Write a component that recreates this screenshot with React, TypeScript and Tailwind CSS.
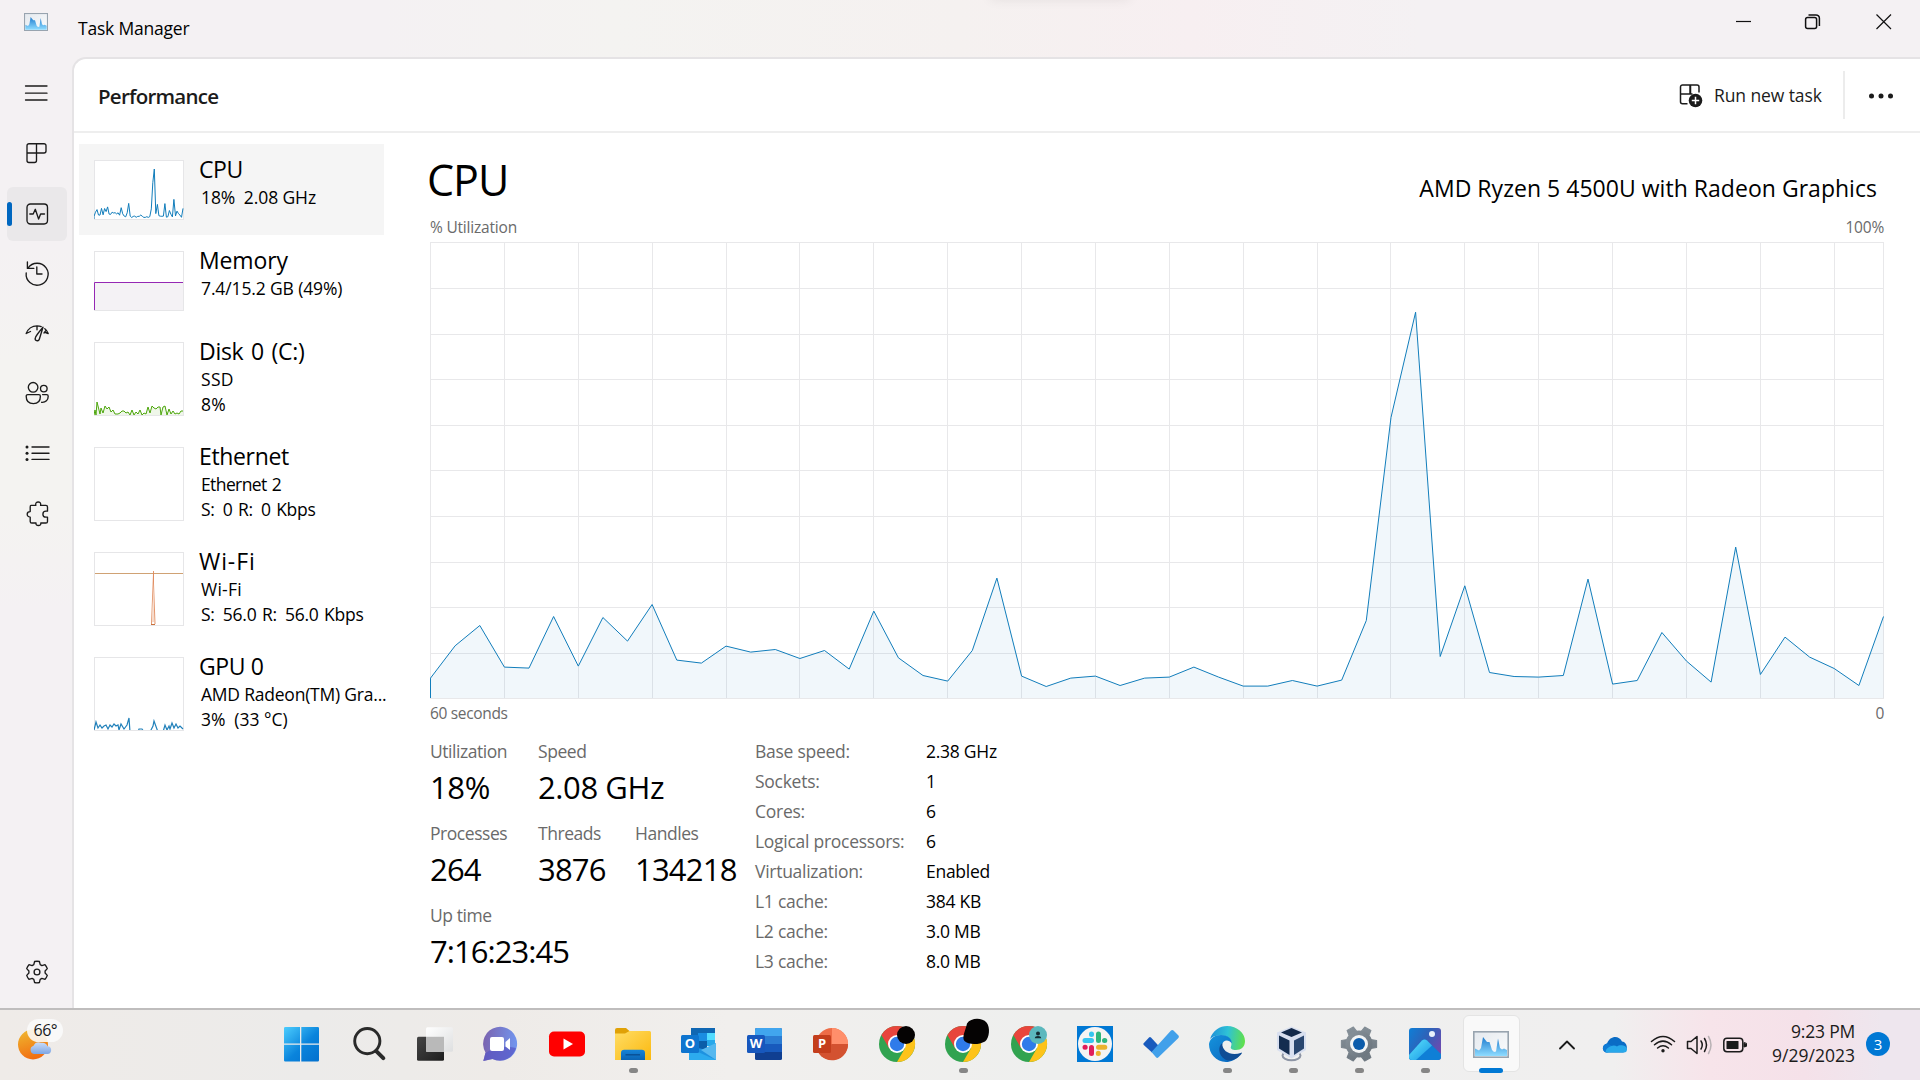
import React from "react";

const cpuTops = [
  678.3, 646, 625.7, 667.3, 668.3, 616.7, 666.3, 617.7, 641.3, 604.7, 660.3, 663.3, 646.3, 652.3, 649.7,
  658.7, 650.7, 669.3, 611.3, 658, 675.7, 681.3, 650.7, 578.3, 676.3, 686.7, 678.3, 676.3, 685.7, 678.3,
  677.3, 667.3, 677.3, 686.3, 686.3, 680.7, 686.3, 680.3, 620.7, 417.6, 312.4, 656.7, 586, 672.7, 676.7,
  677.3, 675.7, 579.3, 684.3, 680.7, 632.7, 661.3, 682.3, 547.3, 674.7, 637.3, 657.3, 668.7, 685.7, 616.7,
];
const cpu = cpuTops.map((t) => (698.5 - t) / 456);

const disk = "0,0 1,5 2,0 3,13 6,1 7,7 9,2 11,9 13,6 15,8 17,3 19,5 21,1 24,1 26,2 28,4 30,4 32,2 34,3 36,0 38,5 40,0 42,3 44,1 46,5 48,0 50,2 52,1 54,8 56,2 58,9 60,7 62,6 64,8 66,8 67,0 69,8 71,9 73,0 75,6 77,1 79,4 81,1 83,2 85,1 87,4 89,4";
const gpu = "0,0 2,8 4,2 6,5 8,2 10,4 12,5 14,1 16,5 18,3 20,6 22,4 24,5 25,0 27,6 30,1 33,5 35,12 36,-2 44,-2 45,1 48,1 50,-2 56,-2 59,4 60,9 64,-2 69,-2 71,5 73,0 75,4 76,1 78,7 80,2 82,6 84,2 86,4 89,1";
const flip = (s: string, h: number) =>
  s.split(" ").map((p) => { const [x, y] = p.split(",").map(Number); return `${x},${h - y}`; }).join(" ");

function MiniSvg({ h, children }: { h: number; children?: React.ReactNode }) {
  return (
    <svg width="90" height={h} className="block shrink-0" fill="none">
      <rect x="0.5" y="0.5" width="89" height={h - 1} fill="#fff" stroke="#e6e6e8" />
      {children}
    </svg>
  );
}

function CpuChart() {
  const pts = cpu.map((v, i) => `${(0.5 + (i * 1453) / 59).toFixed(1)},${(456.3 - v * 456).toFixed(1)}`).join(" ");
  const cols = Array.from({ length: 19 }, (_, i) => Math.round((i + 1) * 73.88) + 0.5);
  const rows = Array.from({ length: 9 }, (_, i) => Math.ceil((i + 1) * 45.6) + 0.5);
  return (
    <svg width="1454" height="457" className="block" fill="none">
      <g stroke="#e8e8ea">
        <rect x="0.5" y="0.5" width="1453" height="456" />
        {cols.map((x) => <path key={x} d={`M${x} 0V456`} />)}
        {rows.map((y) => <path key={y} d={`M0 ${y}H1453`} />)}
      </g>
      <polygon points={`0.5,456 ${pts} 1453.5,456`} fill="#117dbb" fillOpacity="0.06" />
      <polyline points={`0.5,456 ${pts}`} stroke="#117dbb" strokeWidth="1" />
    </svg>
  );
}

const list = [
  { name: "CPU", nameTrack: "tracking-[-0.4px]", h: 60, box: "h-[91px]", lines: ["18%\u2002" + "2.08 GHz"], track: ["tracking-[-0.1px]"] },
  { name: "Memory", nameTrack: "tracking-[-0.15px]", h: 60, box: "h-[91px]", lines: ["7.4/15.2 GB (49%)"], track: ["tracking-[-0.13px]"] },
  { name: "Disk 0 (C:)", nameTrack: "tracking-[-0.3px] [word-spacing:2px]", h: 74, box: "h-[105px]", lines: ["SSD", "8%"], track: ["tracking-[0.3px]", "tracking-[0.3px]"] },
  { name: "Ethernet", nameTrack: "tracking-[-0.35px]", h: 74, box: "h-[105px]", lines: ["Ethernet 2", "S: \u20090 R: \u20090 Kbps"], track: ["tracking-[-0.6px] [word-spacing:1.2px]", "tracking-[-0.3px] [word-spacing:1.3px]"] },
  { name: "Wi-Fi", nameTrack: "tracking-[0.9px]", h: 74, box: "h-[105px]", lines: ["Wi-Fi", "S: \u200956.0 R: \u200956.0 Kbps"], track: ["tracking-[0.25px]", "tracking-[-0.25px] [word-spacing:1.2px]"] },
  { name: "GPU 0", nameTrack: "tracking-[-0.4px]", h: 74, box: "h-[105px]", lines: ["AMD Radeon(TM) Gra...", "3%\u2002(33 °C)"], track: ["tracking-[-0.22px]", "tracking-[0px]"] },
];

function Thumb({ i, h }: { i: number; h: number }) {
  const cpuPts = cpu.map((v, k) => `${((k * 89) / 59).toFixed(1)},${(59 - v * 59).toFixed(1)}`).join(" ");
  return (
    <MiniSvg h={h}>
      {i === 0 && <polyline points={`0,59 ${cpuPts}`} stroke="#117dbb" strokeWidth="1" />}
      {i === 1 && <><rect x="1" y="31" width="88" height="28" fill="#f4f2f5" /><path d="M.5 59V31.5H89" stroke="#9528b4" /></>}
      {i === 2 && <><polygon points={`0,73 ${flip(disk, 73)} 89,73`} fill="#eff7e9" /><polyline points={flip(disk, 73)} stroke="#4da60c" /></>}
      {i === 4 && <><path d="M1 21.5H89" stroke="#d0a274" /><path d="M59.5 19V32L61 72M59.5 22L57.5 72" stroke="#e08a5c" strokeWidth=".9" /><path d="M59.5 30L58 70L60 70Z" fill="#f6d9c8" /><path d="M57 72.5H61" stroke="#c9713d" /></>}
      {i === 5 && <polyline points={flip(gpu, 73)} stroke="#2080ba" strokeWidth="1.2" />}
      {i === 5 && <path d="M0 73.5H90" stroke="#e6e6e8" />}
    </MiniSvg>
  );
}

const navIcons = [
  <path key="m" d="M.5 5H22M.5 12.2H22M.5 19H22" strokeWidth="1.3" />,
  <path key="p" d="M4 2.7H19a2 2 0 0 1 2 2V10a2 2 0 0 1-2 2H2V4.7a2 2 0 0 1 2-2ZM2 12V19.5a2 2 0 0 0 2 2H9.5a2 2 0 0 0 2-2V2.7" />,
  <><rect x="2" y="2" width="20.5" height="20" rx="3.4" /><path d="M4.8 12H8.2L10.3 7.3L13.6 17L15.6 12H19.5" /></>,
  <><path d="M2.4 1V7.400H8.8M3 7.100A11 11 0 1 1 1.200 12" /><path d="M11.8 5.800V13H17" /></>,
  <><path d="M1.2 12.500C2.8 8.300 7 4.900 12 4.900c1.8 0 3 .2 4.2.7M19.8 7.700C21.5 8.900 22.5 10.500 23.2 12.500L20.5 11.500M1.2 12.500L5.5 10.500M12 4.900V8.800M19 12L20.8 9.700" /><path d="M18 6.300L14.3 18.300a2.1 2.1 0 0 1-4-1.3Q10.8 14.700 18 6.300Z" /></>,
  <><circle cx="8.1" cy="6.3" r="4.8" /><circle cx="18.8" cy="7.6" r="3.3" /><path d="M2.8 13.6H13.8a1.6 1.6 0 0 1 1.6 1.6c0 4.6-2.6 7.4-7 7.4s-7.2-2.8-7.2-7.4a1.6 1.6 0 0 1 1.6-1.6ZM17.6 13.6H21.6a1.6 1.6 0 0 1 1.6 1.6c0 4-2.5 6.4-6.6 6.1" /></>,
  <><path d="M7 6H24M7 12.200H24M7 18.400H24" /><g fill="#1b1b1b" stroke="none"><circle cx="2" cy="6" r="1.5" /><circle cx="2" cy="12.200" r="1.5" /><circle cx="2" cy="18.400" r="1.5" /></g></>,
  <path key="s" transform="translate(.8 .8)" d="M5.2 3.6H10c-.5-2.8 1-3.4 2.4-3.4s2.9.6 2.4 3.4h5.3a1.6 1.6 0 0 1 1.6 1.6v4.2h-1.6a3 3 0 0 0 0 6H21.7v4.2a1.6 1.6 0 0 1-1.6 1.6H15c.2 2.200-1 2.500-2.400 2.500s-2.600-.3-2.400-2.500H6a1.6 1.6 0 0 1-1.6-1.6V15.3C2.2 15.3 1.4 13.8 1.4 12.4S2.2 9.8 4.4 9.8V5.2c0-.9.2-1.6.8-1.6Z" />,
];

function NavIcon({ children }: { children: React.ReactNode }) {
  return <svg width="24" height="24" viewBox="0 0 24 24" overflow="visible" fill="none" stroke="#1b1b1b" strokeWidth="1.35" strokeLinejoin="round" strokeLinecap="round">{children}</svg>;
}

const gear = (teeth: number, ro: number, ri: number, c: number, wo: number, wi: number) => {
  const p: string[] = [];
  for (let i = 0; i < teeth; i++) {
    const a = (i * 2 * Math.PI) / teeth;
    [[-wi, ri], [-wo, ro], [wo, ro], [wi, ri]].forEach(([d, r]) =>
      p.push(`${(c + r * Math.sin(a + d)).toFixed(2)},${(c - r * Math.cos(a + d)).toFixed(2)}`));
  }
  return p.join(" ");
};

function TmIcon({ className, id }: { className: string; id: string }) {
  return (
    <svg viewBox="0 0 36 27" className={className} preserveAspectRatio="none">
      <defs>
        <linearGradient id={id} x1="0" y1="0" x2="0" y2="1"><stop stopColor="#1f7ccf" /><stop offset="1" stopColor="#8fdcff" /></linearGradient>
        <linearGradient id={id + "b"} x1="0" y1="0" x2="1" y2="1"><stop stopColor="#e4e9ee" /><stop offset="1" stopColor="#fbfcfd" /></linearGradient>
      </defs>
      <rect x=".8" y=".8" width="34.4" height="25.4" fill={`url(#${id}b)`} stroke="#98a4af" strokeWidth="1.6" />
      <path d="M2 17.5 6 19.5 8 17 10 6 12 8.5 14 11 16.500 11 19 19 21 21 23 20.500 25 7.500 27 17 29 18.500 31 17.500 34 19V25H2Z" fill={`url(#${id})`} />
    </svg>
  );
}

function Chrome({ badge }: { badge: React.ReactNode }) {
  return (
    <svg width="36" height="36" viewBox="-18 -18 36 36" overflow="visible">
      <circle r="18" fill="#31a350" />
      <path d="M-15.600-9A18 18 0 0 1 15.600-9L0-9-7.800 4.500Z" fill="#e8453c" />
      <path d="M15.600-9A18 18 0 0 1 0 18L7.800 4.500 0-9Z" fill="#fdc31a" />
      <circle r="9" fill="#fff" /><circle r="7.200" fill="#2f7bea" />
      {badge}
    </svg>
  );
}

function S({ children, defs }: { children: React.ReactNode; defs?: React.ReactNode }) {
  return <svg width="36" height="36" viewBox="0 0 36 36" overflow="visible">{defs && <defs>{defs}</defs>}{children}</svg>;
}
function Grad({ id, a, b }: { id: string; a: string; b: string }) {
  return <linearGradient id={id} x1="0" y1="0" x2="1" y2="1"><stop stopColor={a} /><stop offset="1" stopColor={b} /></linearGradient>;
}
function Letter({ x, children }: { x: number; children: string }) {
  return <text x={x} y="22" textAnchor="middle" fontSize="13" fontWeight="700" fontFamily="Open Sans, sans-serif" fill="#fff">{children}</text>;
}

const apps: { icon: React.ReactNode; dot?: boolean; active?: boolean }[] = [
  { icon: <S defs={<linearGradient id="win" gradientUnits="userSpaceOnUse" x1="0" y1="0" x2="32" y2="34"><stop stopColor="#4fd0ff" /><stop offset=".6" stopColor="#0a84dc" /><stop offset="1" stopColor="#0473d0" /></linearGradient>}><path transform="translate(-2 .4)" fill="url(#win)" d="M2.200.6H17V17H1V1.800A1.200 1.200 0 0 1 2.200.6ZM18.300.6H34.800A1.200 1.200 0 0 1 36 1.800V17H18.300ZM1 18.300H17V35H2.200A1.200 1.200 0 0 1 1 33.800ZM18.300 18.300H36V33.800A1.200 1.200 0 0 1 34.800 35H18.300Z" /></S> },
  { icon: <S><g transform="translate(-1.200 .6)" fill="none" stroke="#2a2a2a"><circle cx="17.500" cy="14.500" r="12.600" strokeWidth="2.900" /><path d="M26.500 24.500L33.500 31.500" strokeWidth="4" strokeLinecap="round" /></g></S> },
  { icon: <S defs={<><Grad id="tv" a="#454545" b="#1d1d1d" /><Grad id="tv2" a="#ffffff" b="#dedfe0" /></>}><g transform="translate(-2 .8)"><rect x="2" y="10" width="27" height="24" rx="1.500" fill="url(#tv)" /><rect x="11" y=".5" width="27" height="24.500" rx="1.500" fill="url(#tv2)" /><path d="M11 10H29V25H11Z" fill="#b9b9b9" /></g></S> },
  { icon: <S defs={<linearGradient id="chat" x1="0" y1=".2" x2="1" y2="0.3"><stop stopColor="#7a62ae" /><stop offset="1" stopColor="#7295ee" /></linearGradient>}><g transform="translate(-1 0)"><path d="M1.300 35L3.500 26.500A17 17 0 1 1 10.500 33Z" fill="url(#chat)" /><path d="M1.300 35L3.500 27Q17 18 34 22A17 17 0 0 1 10.500 33Z" fill="#5756c4" opacity=".7" /><rect x="8" y="11" width="14" height="14" rx="2" fill="#fff" /><path d="M23.500 16L28 12V24L23.500 20.500Z" fill="#fff" /></g></S> },
  { icon: <S><rect y="5.500" width="36" height="25" rx="5" fill="#f00" /><path d="M14.500 12.500L24 18L14.500 23.500Z" fill="#fff" /></S> },
  { dot: true, icon: <S defs={<><Grad id="fo" a="#ffdd65" b="#fbb80e" /><linearGradient id="fb" x1="0" y1="0" x2="0" y2="1"><stop stopColor="#1684d8" /><stop offset="1" stopColor="#0b64b4" /></linearGradient></>}><path d="M0 4a2 2 0 0 1 2-2H11L15 5.500 11 9H0Z" fill="#e0a106" /><path d="M0 7.500H10L14.500 5H34.500A1.500 1.500 0 0 1 36 6.500V34H0Z" fill="url(#fo)" /><path d="M6 34V27a3.200 3.200 0 0 1 3.200-3.200H26.800A3.200 3.200 0 0 1 30 27V34Z" fill="url(#fb)" /><path d="M10.500 28.800H25" stroke="#0a4f93" strokeWidth="1.400" /></S> },
  { icon: <S><path d="M10 2H34V20H10Z" fill="#1067b3" /><path d="M17 7H26V15H17Z" fill="#1a8de2" /><path d="M26 7H34V14H26Z" fill="#53dcff" /><path d="M18 15H26V24H18Z" fill="#0b5da9" /><path d="M26 14H34V20H26Z" fill="#28a8ea" /><path d="M8 20L26 24 35 17V34H8Z" fill="#1e92e0" /><path d="M8 22L35 34H8Z" fill="#2cabef" /><path d="M20 24L35 17V34Z" fill="#56b8ef" /><rect y="9" width="18" height="18" rx="1.500" fill="#0f75cf" /><Letter x={9}>O</Letter></S> },
  { icon: <S><rect x="8" y="2" width="27" height="32" rx="1.500" fill="#103f91" /><path d="M8 3.500A1.500 1.500 0 0 1 9.500 2H33.500A1.500 1.500 0 0 1 35 3.500V10H8Z" fill="#41a5ee" /><path d="M8 10H35V18H8Z" fill="#2b7cd3" /><path d="M8 18H35V26H8Z" fill="#185abd" /><rect y="9" width="18" height="18" rx="1.500" fill="#1757bd" /><Letter x={9}>W</Letter></S> },
  { icon: <S><circle cx="19" cy="18" r="16" fill="#ed6c47" /><path d="M19 2A16 16 0 0 1 35 18H19Z" fill="#ff8f6b" /><path d="M35 18A16 16 0 0 1 5 26L19 18Z" fill="#d35230" /><rect y="9" width="18" height="18" rx="1.500" fill="#c43e1c" /><Letter x={9}>P</Letter></S> },
  { icon: <Chrome badge={<circle cx="9" cy="-9" r="9" fill="#050303" />} /> },
  { dot: true, icon: <Chrome badge={<path d="M4-20.500C8-26.500 19-26.500 23.500-21.500C27.500-16.500 26.500-6 22-2.500C16 1 5 1 1.500-3C-1.500-7 2.500-13 4-20.500Z" fill="#050303" />} /> },
  { icon: <Chrome badge={<><circle cx="9" cy="-9" r="9" fill="#5bb8bd" /><circle cx="9" cy="-10.500" r="2" fill="#152c33" /><path d="M5.800-5.800Q6-8 9-8T12.200-5.800Z" fill="#152c33" /></>} /> },
  { icon: <S><path fill="#0078d4" d="M0 0H36V36H0Z" /><circle cx="18" cy="18" r="17" fill="#f5f4f3" /><g strokeWidth="5" strokeLinecap="round" fill="none"><path d="M8 14.500H14.500M14.500 8V8.500" stroke="#36c5f0" /><path d="M21.500 8V14.500M27.800 14.500H27.500" stroke="#2eb67d" /><path d="M21.500 21.200H27.800M21.300 27.500V27.200" stroke="#ecb22e" /><path d="M14.500 21.500V27.500M8 21.200H8.200" stroke="#e01e5a" /></g></S> },
  { icon: <S><path d="M.4 17.500L6 11.400Q7 10.600 8 11.500L15.800 20 9 26.500.5 18.700Z" fill="#185abd" /><path d="M8.500 26L28 4.600Q29.300 3.400 30.500 4.600L35.500 9.600Q36.400 10.700 35.400 12L15.500 31.300Q14.200 32.600 13 31.300Z" fill="#41a0ea" /></S> },
  { dot: true, icon: <S defs={<><linearGradient id="e1" x1="0" y1=".3" x2="1" y2=".4"><stop stopColor="#1d8fd8" /><stop offset=".5" stopColor="#2fc2d6" /><stop offset="1" stopColor="#5fe04c" /></linearGradient><Grad id="e2" a="#1593dc" b="#0a63bd" /></>}><path d="M1 13C4 4 11 0 18 0C28 0 36 7 36 15C36 21 32 24 27 24C23 24 21 22.500 22 20.500C23.500 17 22 10 13 9.500C7 9 3 11 1 13Z" fill="url(#e1)" /><path d="M0 18C1 12 6 9 12 9C19 9 23 13 22.800 17.500C20 13 13.500 13.500 13 19.500C12.500 26 19 31 31 28.500C27 34 22 36 17 36C7 35.500 0 28 0 18Z" fill="url(#e2)" /><path d="M13.200 17C9 20 9 29 15.500 33C20 36.500 29 33.500 33 27Q33.200 26.300 32.300 26.700C23 30 13 26.500 13.200 17Z" fill="#104d95" /></S> },
  { dot: true, icon: <S><ellipse cx="16.500" cy="29.500" rx="9" ry="4.800" fill="none" stroke="#8d95a5" strokeWidth="2" /><path d="M16.500 .5L31 6.500V24L16.500 32.500 2 24V6.500Z" fill="#d8dfef" /><path d="M16.500 2L27 6.500 16.500 11 6 6.500Z" fill="#13294a" /><path d="M4 9.500L14.500 14.500V29L4 22.500Z" fill="#142d50" /><path d="M29 9.500L19 14.500V29L29 22.500Z" fill="#29466f" /></S> },
  { dot: true, icon: <S defs={<Grad id="ge" a="#8a949c" b="#68727b" />}><g transform="rotate(30 18 18)"><polygon points={gear(6, 18, 12.500, 18, 0.2, 0.36)} fill="url(#ge)" stroke="url(#ge)" strokeLinejoin="round" strokeWidth="1" /></g><circle cx="18" cy="18" r="13.500" fill="url(#ge)" /><circle cx="18" cy="18" r="9" fill="#f2f4f5" /><circle cx="18" cy="18" r="6" fill="#0c5cab" /></S> },
  { dot: true, icon: <S defs={<><linearGradient id="ph" x1="0" y1="0" x2="1" y2=".6"><stop stopColor="#0e7fd7" /><stop offset=".5" stopColor="#2d63b9" /><stop offset="1" stopColor="#6b4bb0" /></linearGradient><Grad id="ph2" a="#5fe3fb" b="#1495e6" /></>}><rect x="2" y="2" width="32" height="32" rx="3" fill="url(#ph)" /><path d="M2 29L15 14.500Q17.500 12.500 20 14.500L34 28V31A3 3 0 0 1 31 34H5A3 3 0 0 1 2 31Z" fill="#0f7fd6" /><path d="M2 29L15 14.500Q17.500 12.500 20 14.500L25 19.500 9 34H5A3 3 0 0 1 2 31Z" fill="url(#ph2)" /><circle cx="25" cy="8" r="3" fill="#e9f1fb" /></S> },
  { active: true, icon: <TmIcon id="tma" className="h-[27px] w-9" /> },
];

const stats = [
  [["Utilization", "18%"], ["Speed", "2.08 GHz"]],
  [["Processes", "264"], ["Threads", "3876"], ["Handles", "134218"]],
  [["Up time", "7:16:23:45"]],
];
const valueTrack = ["tracking-[-0.4px]", "tracking-[-0.8px]", "tracking-[-0.95px]"];
const colW = ["w-[108px]", "w-[97px]", "w-[110px]"];
const specs = [
  ["Base speed:", "2.38 GHz"], ["Sockets:", "1"], ["Cores:", "6"], ["Logical processors:", "6"],
  ["Virtualization:", "Enabled"], ["L1 cache:", "384 KB"], ["L2 cache:", "3.0 MB"], ["L3 cache:", "8.0 MB"],
];

export default function App() {
  return (
    <div className="flex h-[1080px] w-[1920px] flex-col overflow-hidden bg-[#f4f1f3] font-['Open_Sans',sans-serif] text-black">
      <header className="relative flex h-[57px] shrink-0 bg-[linear-gradient(90deg,#f4f1f3_0%,#f4f1f3_20%,#f4f3f1_32%,#f5f1f0_50%,#f7eff1_62%,#f4f1f3_74%)]">
        <div className="absolute top-[-10px] left-[992px] h-[8px] w-[136px] shadow-[0_0_12px_2px_rgba(0,0,0,0.07)]" />
        <TmIcon id="tmt" className="mt-[13px] ml-6 h-[18px] w-6" />
        <span className="mt-[15px] ml-[30px] text-[17.5px] leading-[27px] tracking-[-0.2px]">Task Manager</span>
        <svg className="mt-[14px] mr-[28px] ml-auto" width="156" height="16" fill="none" stroke="#111" strokeWidth="1.2">
          <path d="M0 7.500H15" />
          <rect x="69.600" y="3.600" width="11" height="11" rx="2" strokeWidth="1.500" />
          <path d="M72.500.9H80a3.400 3.400 0 0 1 3.400 3.400V12" strokeWidth="1.500" />
          <path d="M140.500.5L155 15M155 .5L140.500 15" />
        </svg>
      </header>

      <div className="flex h-[951px] shrink-0">
        <nav className="flex w-[72px] shrink-0 flex-col gap-[6px] bg-[linear-gradient(180deg,#f4f1f3_0%,#f4f1f3_20%,#f4f3f1_32%,#f4f3f1_48%,#f4f1f3_58%)] pt-[9px] pb-[9px] pl-[7px]">
          {navIcons.map((ic, i) => (
            <div key={i} className={i === 2 ? "mt-px -mb-px flex h-[54px] w-[60px] items-center rounded-[6px] bg-[#eae8ea]" : "flex h-[54px] w-[60px] items-center"}>
              <div className={i === 2 ? "h-6 w-[5px] rounded-[3px] bg-[#0067c0]" : "h-6 w-[5px]"} />
              <div className="ml-[13px]"><NavIcon>{ic}</NavIcon></div>
            </div>
          ))}
          <div className="mt-auto flex h-[54px] items-center pl-[18px]">
            <NavIcon>
              <path d="M12 1.200c1 0 1.700.1 2.400.3l.8 3.100 1.700 1 3.100-.9c1 1.100 1.800 2.400 2.300 3.900l-2.200 2.400v2l2.200 2.400c-.5 1.500-1.300 2.800-2.300 3.900l-3.100-.9-1.700 1-.8 3.100c-1.500.4-3.300.4-4.800 0l-.8-3.100-1.700-1-3.100.9c-1-1.100-1.800-2.400-2.300-3.900l2.200-2.400v-2L1.700 8.600C2.200 7.100 3 5.800 4 4.700l3.100.9 1.700-1 .8-3.100c.7-.2 1.400-.3 2.400-.3Z" />
              <circle cx="12" cy="12" r="2.900" />
            </NavIcon>
          </div>
        </nav>

        <section className="flex grow flex-col rounded-tl-[14px] border-t-2 border-l-2 border-[#e5e3e5] bg-white">
          <div className="flex h-[74px] shrink-0 items-center border-b-2 border-[#eeeeee]">
            <h1 className="mt-[2px] ml-[24px] text-[20.5px] leading-[30px] font-semibold tracking-[-0.75px] text-[#1b1b1b]">Performance</h1>
            <svg className="mt-px ml-auto" width="24" height="24" fill="none" stroke="#1b1b1b" strokeWidth="1.500">
              <path d="M8.500 19.800H3.500A2 2 0 0 1 1.500 17.800V3A2 2 0 0 1 3.500 1H18A2 2 0 0 1 20 3V8.500M11.500 1V10H1.500M11 10H13.500M11 1V10" />
              <circle cx="16.500" cy="16.500" r="6.800" fill="#1b1b1b" stroke="none" />
              <path d="M16.500 12.800V20.200M12.800 16.500H20.200" stroke="#fff" />
            </svg>
            <span className="ml-[11px] w-[117px] text-[17.5px] leading-[26px] tracking-[-0.1px] whitespace-nowrap text-[#1b1b1b]">Run new task</span>
            <div className="ml-[12px] h-12 w-[2px] bg-[#ececec]" />
            <svg className="mt-[2px] mr-[27px] ml-[24px]" width="24" height="6" fill="#1b1b1b"><circle cx="2.500" cy="3" r="2.500" /><circle cx="12" cy="3" r="2.500" /><circle cx="21.500" cy="3" r="2.500" /></svg>
          </div>

          <div className="flex grow">
            <aside className="flex w-[350px] shrink-0 flex-col pt-[11px] pl-[5px]">
              {list.map((it, i) => (
                <div key={it.name} className={`${it.box} ${i === 0 ? "bg-[#f5f5f5]" : ""} flex w-[305px] shrink-0 pt-4 pl-[15px]`}>
                  <Thumb i={i} h={it.h} />
                  <div className="-mt-[6px] ml-[15px] whitespace-nowrap">
                    <div className={`${it.nameTrack} mb-px text-[23px] leading-[30px]`}>{it.name}</div>
                    {it.lines.map((l, k) => (
                      <div key={k} className={`${it.track[k]} pl-[2px] text-[17.5px] leading-[25px]`}>{l}</div>
                    ))}
                  </div>
                </div>
              ))}
            </aside>

            <main className="flex w-[1454px] flex-col pl-[6px]">
              <div className="flex h-[92px] w-[1454px] shrink-0 justify-between pt-[19px]">
                <h2 className="-ml-[3px] text-[43px] leading-[56px] tracking-[-1px]">CPU</h2>
                <span className="mt-[20px] mr-[7px] text-[23px] leading-[32px] tracking-[0.03px]">AMD Ryzen 5 4500U with Radeon Graphics</span>
              </div>
              <div className="-mt-[8px] flex w-[1454px] shrink-0 justify-between text-[15.5px] leading-[20px] tracking-[-0.2px] text-[#6a6a6a]">
                <span>% Utilization</span><span>100%</span>
              </div>
              <div className="mt-[5px]"><CpuChart /></div>
              <div className="mt-[4px] flex w-[1454px] shrink-0 justify-between text-[15.5px] leading-[20px] tracking-[-0.33px] text-[#6a6a6a]">
                <span>60 seconds</span><span>0</span>
              </div>
              <div className="mt-[13px] flex">
                <div className="flex w-[325px] flex-col gap-[10px] pt-[3px]">
                  {stats.map((row, i) => (
                    <div key={i} className="flex">
                      {row.map(([label, value], k) => (
                        <div key={label} className={`${colW[k]} whitespace-nowrap`}>
                          <div className="text-[17.5px] leading-[24px] tracking-[-0.45px] text-[#6a6a6a]">{label}</div>
                          <div className={`${valueTrack[i]} text-[31px] leading-[48px]`}>{value}</div>
                        </div>
                      ))}
                    </div>
                  ))}
                </div>
                <div className="text-[17.5px] leading-[30px] tracking-[-0.27px]">
                  {specs.map(([k, v]) => (
                    <div key={k} className="flex"><span className="w-[171px] text-[#6a6a6a]">{k}</span><span>{v}</span></div>
                  ))}
                </div>
              </div>
            </main>
          </div>
        </section>
      </div>

      <footer className="flex h-[72px] shrink-0 items-center border-t-2 border-[#bfbdbd] bg-[linear-gradient(90deg,#efebe8_0%,#ecebea_16%,#eeebe8_26%,#f1efed_38%,#eeefee_55%,#f0efef_84%,#f7e4ea_89%,#f5e1e9_94%,#eee6ee_98%)]">
        <div className="flex w-[270px] shrink-0 pl-[18px]">
          <svg className="-mt-2" width="48" height="48" viewBox="0 0 48 48">
            <defs><linearGradient id="sun" x1=".3" y1="0" x2=".6" y2="1"><stop stopColor="#efb52e" /><stop offset="1" stopColor="#f26a10" /></linearGradient><linearGradient id="cl" x1="0" y1="0" x2="0" y2="1"><stop stopColor="#c9dcfa" /><stop offset="1" stopColor="#7ea6e4" /></linearGradient></defs>
            <circle cx="15" cy="27.500" r="15" fill="url(#sun)" />
            <path d="M16 37a4.300 4.300 0 0 1-.5-8.300Q18 24 23 25.800Q28 25 29.500 29.200A3.900 3.900 0 0 1 29 37Z" fill="url(#cl)" />
            <rect x="9" y="2" width="36" height="23" rx="11.500" fill="#fbfbfb" fillOpacity=".88" />
            <text x="15.500" y="18.800" fontSize="16" letterSpacing="-.5" fontFamily="Open Sans, sans-serif" fill="#1b1b1b">66°</text>
          </svg>
        </div>
        {apps.map((a, i) => (
          <div key={i} className="relative flex h-[70px] w-[66px] shrink-0 items-center justify-center">
            {a.active && <div className="absolute top-[5px] left-[5px] h-[57px] w-[57px] rounded-[6px] border border-[#e4e4e4] bg-[#f9f9f9]" />}
            <div className="relative -mt-[2px]">{a.icon}</div>
            {a.dot && <div className="absolute top-[58px] left-[29px] h-[5px] w-[9px] rounded-full bg-[#868686]" />}
            {a.active && <div className="absolute top-[58px] left-[21px] h-[5px] w-6 rounded-full bg-[#0078d4]" />}
          </div>
        ))}
        <svg className="-mt-px ml-[35px] shrink-0" width="190" height="26" viewBox="0 0 190 26" fill="none" stroke="#1b1b1b" strokeWidth="1.500" strokeLinecap="round" strokeLinejoin="round">
          <path d="M1 16.500L8 9.500L15 16.500" strokeWidth="1.800" />
          <g stroke="none"><path d="M48 20.500C43 20.500 42 13 48 11.500C51 3.500 60 3 63 9.500C69 10 70 20.500 63 20.500Z" fill="#0a6cc5" /><path d="M48 20.500C43 20.500 42 13 48 11.500L60 17Z" fill="#0f7bd5" /><path d="M47 20.500C45 17 54 11 58 14.500C60 12 68 13 68 17C68 19.500 67 20.500 65 20.500Z" fill="#28a8ea" /></g>
          <path d="M92.500 9.500Q104 -0.500 115.500 9.500M95.500 12.700Q104 5.500 112.500 12.700M98.600 16Q104 11.500 109.400 16" /><circle cx="104" cy="18.800" r="1.700" fill="#1b1b1b" stroke="none" />
          <path d="M128.500 9.500H132L138 4.500V21.500L132 16.500H128.500Z" /><path d="M142 9Q144.500 13 142 17M145.500 6.500Q149.500 13 145.500 19.500" /><path d="M149.500 4.500Q154.500 13 149.500 21.500" stroke="#b9b2b5" />
          <rect x="164.800" y="6.200" width="19" height="13.500" rx="3.200" /><rect x="167.500" y="9" width="12" height="8" rx=".5" fill="#1b1b1b" stroke="none" /><path d="M185 11V15L187.500 14.300V11.700Z" fill="#1b1b1b" strokeWidth="1" />
        </svg>
        <div className="-mt-[4px] ml-[6px] w-[100px] shrink-0 text-right text-[17.500px] leading-[24px] text-[#1b1b1b]"><div className="tracking-[-0.2px]">9:23 PM</div><div className="tracking-[0px]">9/29/2023</div></div>
        <div className="-mt-[2px] ml-[11px] flex h-6 w-6 shrink-0 items-center justify-center rounded-full bg-[#0078d4] text-[15px] text-white">3</div>
      </footer>
    </div>
  );
}
